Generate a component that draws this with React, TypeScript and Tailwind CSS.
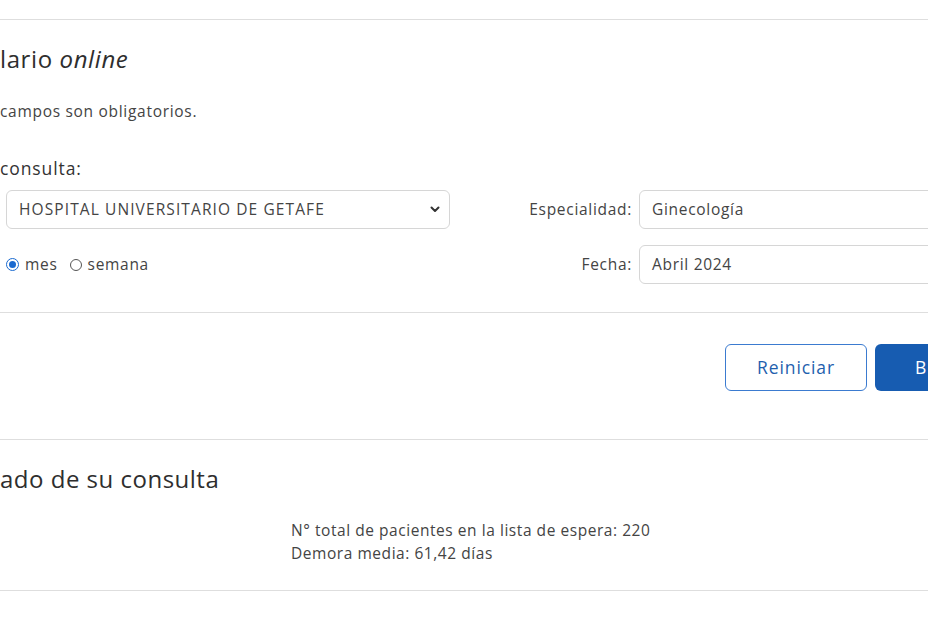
import { useState } from "react";

function Radio({ checked }: { checked: boolean }) {
  return checked ? (
    <span className="w-[13px] h-[13px] rounded-full border-[1.5px] border-[#1a6ad0] bg-white flex items-center justify-center">
      <span className="w-[7px] h-[7px] rounded-full bg-[#1a6ad0]" />
    </span>
  ) : (
    <span className="w-[12px] h-[12px] rounded-full border border-[#555] bg-white" />
  );
}

export default function App() {
  const [periodo, setPeriodo] = useState("mes");

  return (
    <div className="w-[928px] h-[621px] overflow-hidden bg-white text-[#333] font-['Open_Sans',sans-serif]">
      {/* Línea superior */}
      <div className="h-[20px] border-b border-[#dedede]" />

      {/* Formulario */}
      <div className="pt-[23px]">
        <h2 className="text-[24px] leading-[32px] tracking-[0.6px] text-[#2e2e2e]">
          lario <em>online</em>
        </h2>
        <p className="mt-[25px] text-[15.5px] leading-[22px] tracking-[0.7px] text-[#444]">campos son obligatorios.</p>
        <p className="mt-[34px] text-[17.5px] leading-[24px] tracking-[0.9px] font-medium text-[#333]">consulta:</p>

        <div className="mt-[10px] grid grid-cols-[450px_1fr] gap-y-[16px] text-[15.5px] tracking-[0.7px] text-[#444]">
          <div className="pl-[6px]">
            <div className="h-[39px] border border-[#d6d6d6] rounded-[6px] flex items-center justify-between pl-[12px] pr-[9px]">
              <span className="tracking-[1.1px]">HOSPITAL UNIVERSITARIO DE GETAFE</span>
              <svg width="10" height="7" viewBox="0 0 10 7" fill="none">
                <path d="M1.5 1.5 L5 5 L8.5 1.5" stroke="#333" strokeWidth="2" strokeLinecap="round" strokeLinejoin="round" />
              </svg>
            </div>
          </div>
          <div className="flex items-center">
            <span className="w-[182px] text-right">Especialidad:</span>
            <div className="ml-[7px] h-[39px] w-[400px] border border-[#d6d6d6] rounded-[6px] flex items-center pl-[12px]">
              Ginecología
            </div>
          </div>

          <div className="pl-[6px] flex items-center">
            <button onClick={() => setPeriodo("mes")} className="flex items-center gap-[6px]">
              <Radio checked={periodo === "mes"} />
              <span>mes</span>
            </button>
            <button onClick={() => setPeriodo("semana")} className="ml-[12px] flex items-center gap-[6px]">
              <Radio checked={periodo === "semana"} />
              <span>semana</span>
            </button>
          </div>
          <div className="flex items-center">
            <span className="w-[182px] text-right">Fecha:</span>
            <div className="ml-[7px] h-[39px] w-[400px] border border-[#d6d6d6] rounded-[6px] flex items-center pl-[12px]">
              Abril 2024
            </div>
          </div>
        </div>

        <div className="mt-[28px] border-t border-[#dedede]" />

        {/* Botones */}
        <div className="pt-[31px] pb-[48px] pl-[725px] flex gap-[8px]">
          <button className="w-[142px] h-[47px] shrink-0 rounded-[6px] border border-[#3b7bd0] text-[#1f5fae] text-[17.5px] tracking-[0.9px] font-medium bg-white">
            Reiniciar
          </button>
          <button className="w-[142px] h-[47px] shrink-0 rounded-[6px] bg-[#175cb1] text-white text-[17.5px] font-medium flex items-center pl-[40px]">
            B
          </button>
        </div>
      </div>

      {/* Resultado */}
      <div className="border-t border-[#dedede] pt-[23px]">
        <h2 className="text-[24px] leading-[32px] tracking-[0.5px] text-[#2e2e2e]">ado de su consulta</h2>
        <div className="mt-[24px] pl-[291px] text-[15.5px] leading-[23px] tracking-[0.55px] text-[#444]">
          <p>N° total de pacientes en la lista de espera: 220</p>
          <p>Demora media: 61,42 días</p>
        </div>
        <div className="mt-[25px] border-t border-[#dedede]" />
      </div>
    </div>
  );
}
